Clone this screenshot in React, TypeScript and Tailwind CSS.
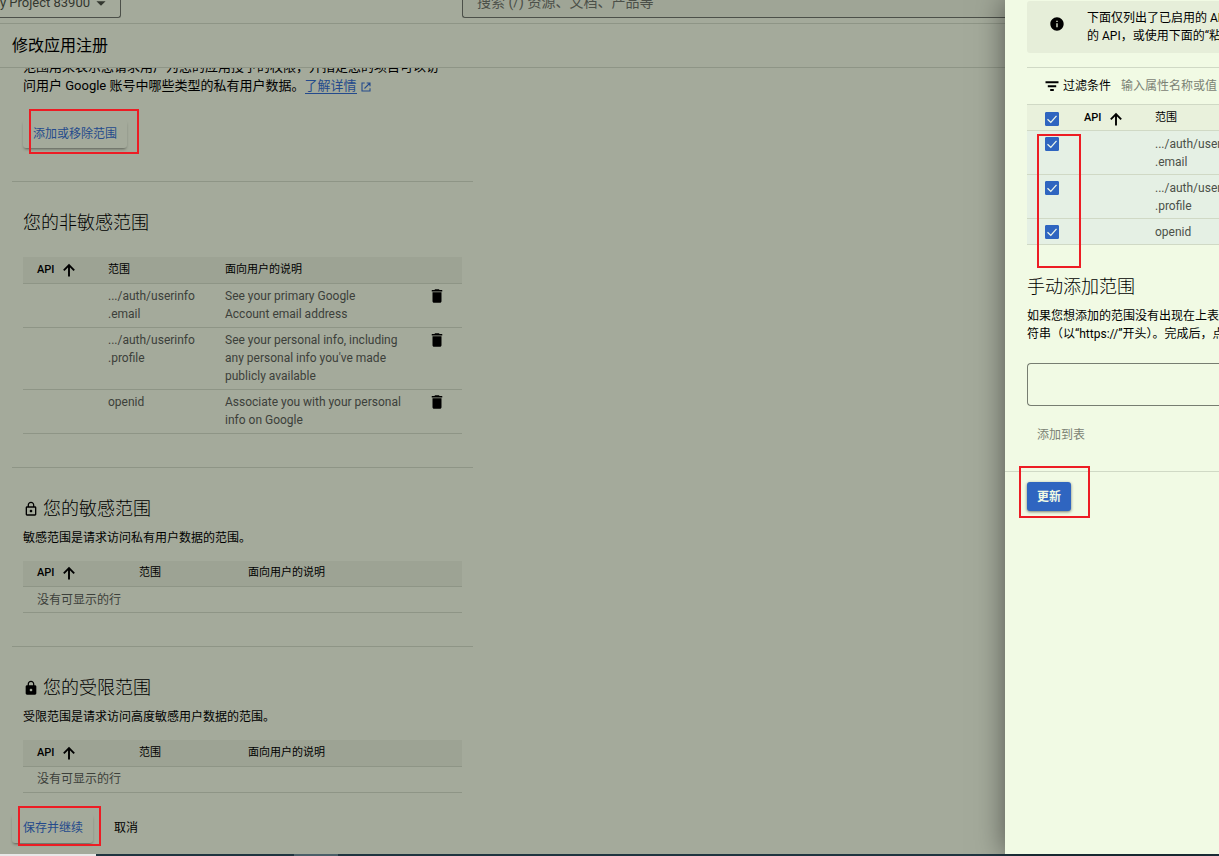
import type { ReactNode } from 'react';
import { MdArrowDropDown, MdDelete, MdInfo, MdLock, MdLockOutline } from 'react-icons/md';

type Scope = { name: string[]; description: string[] };

const scopes: Scope[] = [
  {
    name: ['.../auth/userinfo', '.email'],
    description: ['See your primary Google', 'Account email address'],
  },
  {
    name: ['.../auth/userinfo', '.profile'],
    description: ['See your personal info, including', "any personal info you've made", 'publicly available'],
  },
  {
    name: ['openid'],
    description: ['Associate you with your personal', 'info on Google'],
  },
];

function Lines({ items }: { items: string[] }) {
  return (
    <>
      {items.map((line) => (
        <span key={line} className="block whitespace-nowrap">
          {line}
        </span>
      ))}
    </>
  );
}

function Marked({ children, frame }: { children: ReactNode; frame: string }) {
  return (
    <div className="relative w-fit">
      {children}
      <span aria-hidden="true" className={`pointer-events-none absolute border-2 border-[#ed1c24] ${frame}`} />
    </div>
  );
}

function ApiLabel() {
  return (
    <span className="flex items-center gap-2 font-medium">
      API
      <svg viewBox="0 0 14 14" className="size-[14px] text-black" fill="none" stroke="currentColor" strokeWidth="1.9" aria-hidden="true">
        <path d="M7 13.5V2.2M1.8 7.3L7 2.1l5.2 5.2" />
      </svg>
    </span>
  );
}

function FilterIcon() {
  return (
    <svg viewBox="0 0 14 14" className="mr-1 size-[14px] shrink-0" fill="none" stroke="currentColor" strokeWidth="1.9" aria-hidden="true">
      <path d="M.5 3.2h13M2.8 7.2h8.4M5.2 11h3.6" />
    </svg>
  );
}

function ExternalIcon() {
  return (
    <svg viewBox="0 0 12 12" className="ml-1 inline size-[10px]" fill="none" stroke="currentColor" strokeWidth="1.3" aria-hidden="true">
      <path d="M4.5 1.2H1.2v9.6h9.6V7.5M6.8 1.2h4v4M10.6 1.4L4.2 7.8" />
    </svg>
  );
}

function Checkbox({ label }: { label: string }) {
  return (
    <label className="grid size-[14px] place-items-center">
      <input
        type="checkbox"
        defaultChecked
        aria-label={label}
        className="peer col-start-1 row-start-1 size-[14px] appearance-none rounded-[1px] border border-[#2f65c0] checked:bg-[#2f65c0]"
      />
      <svg
        viewBox="0 0 14 14"
        className="pointer-events-none col-start-1 row-start-1 hidden size-[14px] peer-checked:block"
        fill="none"
        stroke="#eef7ea"
        strokeWidth="1.3"
        aria-hidden="true"
      >
        <path d="M2.5 7.2l3.3 3.2 5.7-6.6" />
      </svg>
    </label>
  );
}

function EmptyTable({ label }: { label: string }) {
  return (
    <table aria-label={label} className="w-full table-fixed text-left">
      <thead>
        <tr className="h-[26px] border-b border-[#8e9586] bg-[#9da394] text-[11px]">
          <th className="w-[116px] py-0 pl-[14px]">
            <ApiLabel />
          </th>
          <th className="w-[109px] font-normal">范围</th>
          <th className="font-normal">面向用户的说明</th>
        </tr>
      </thead>
      <tbody>
        <tr className="h-[26px] border-b border-[#8e9586] text-[12px] text-[#3c403a]">
          <td colSpan={3} className="pl-[14px]">
            没有可显示的行
          </td>
        </tr>
      </tbody>
    </table>
  );
}

function LockedSection({ icon, title, text }: { icon: ReactNode; title: string; text: string }) {
  return (
    <section className="border-t border-[#8e9586] px-[11px] pt-[29px] pb-[33px]">
      <h2 className="flex items-center gap-1 text-[18px] leading-6 font-light">
        {icon}
        {title}
      </h2>
      <p className="mt-[7px] mb-[13px] text-[12px] leading-5">{text}</p>
      <EmptyTable label={title} />
    </section>
  );
}

function MainPage() {
  return (
    <div className="flex min-w-0 flex-1 flex-col bg-[#a4aa9b]">
      <header className="flex h-6 shrink-0 items-end overflow-hidden border-b border-[#8e9586] pb-[5px]">
        <button
          type="button"
          className="-mt-8 flex h-[30px] w-[121px] shrink-0 items-center justify-end whitespace-nowrap rounded-br-[3px] border-r border-b border-[#4c5049] pr-2 text-[13px] text-[#33372f]"
        >
          My Project 83900
          <MdArrowDropDown className="size-[22px] shrink-0" aria-hidden="true" />
        </button>
        <input
          type="search"
          aria-label="搜索"
          placeholder="搜索 (/) 资源、文档、产品等"
          className="-mt-8 ml-[341px] h-[32px] min-w-0 flex-1 rounded-bl-[3px] border-b border-l border-[#4c5049] bg-[#9fa596] pl-[14px] text-[14px] placeholder:text-[#4c5049]"
        />
      </header>
      <div className="flex h-11 shrink-0 items-center border-b border-[#8e9586] px-3">
        <h1 className="text-[16px] leading-6">修改应用注册</h1>
      </div>
      <main className="min-h-0 flex-1 overflow-hidden">
        <div className="-mt-[11px] ml-3 w-[461px]">
          <div className="px-[11px] pb-[33px]">
            <p className="text-[13px] leading-[19px] whitespace-nowrap">
              范围用来表示您请求用户为您的应用授予的权限，并指定您的项目可以访
              <br />
              问用户 Google 账号中哪些类型的私有用户数据。
              <a href="#scopes" className="text-[#244a8c]">
                <span className="border-b border-[#244a8c]">了解详情</span>
                <ExternalIcon />
              </a>
            </p>
            <div className="mt-[25px]">
              <Marked frame="-top-[11px] left-[6px] h-[45px] w-[110px]">
                <button
                  type="button"
                  className="block h-7 rounded-[3px] px-[10px] text-[12px] leading-7 text-[#244a8c] shadow-[0_2px_3px_-1px_rgba(0,0,0,0.45)]"
                >
                  添加或移除范围
                </button>
              </Marked>
            </div>
          </div>

          <section className="border-t border-[#8e9586] px-[11px] pt-[29px] pb-[33px]">
            <h2 className="mb-[22px] text-[18px] leading-6 font-light">您的非敏感范围</h2>
            <table aria-label="您的非敏感范围" className="w-full table-fixed text-left">
              <thead>
                <tr className="h-[26px] border-b border-[#8e9586] bg-[#9da394] text-[11px]">
                  <th className="w-[85px] pl-[14px]">
                    <ApiLabel />
                  </th>
                  <th className="w-[117px] font-normal">范围</th>
                  <th className="w-[203px] font-normal">面向用户的说明</th>
                  <th />
                </tr>
              </thead>
              <tbody className="text-[12px] leading-[18px] text-[#3c403a]">
                {scopes.map((scope) => (
                  <tr key={scope.name.join('')} className="border-b border-[#8e9586] align-top">
                    <td />
                    <td className="pt-[3px] pb-1">
                      <Lines items={scope.name} />
                    </td>
                    <td className="pt-[3px] pb-1">
                      <Lines items={scope.description} />
                    </td>
                    <td className="pt-[3px]">
                      <button type="button" aria-label="删除" className="block text-black">
                        <MdDelete className="size-[18px]" />
                      </button>
                    </td>
                  </tr>
                ))}
              </tbody>
            </table>
          </section>

          <LockedSection
            icon={<MdLockOutline className="size-4" aria-hidden="true" />}
            title="您的敏感范围"
            text="敏感范围是请求访问私有用户数据的范围。"
          />
          <LockedSection
            icon={<MdLock className="size-4" aria-hidden="true" />}
            title="您的受限范围"
            text="受限范围是请求访问高度敏感用户数据的范围。"
          />

          <div className="-mt-3 flex items-center gap-[21px]">
            <Marked frame="-top-2 left-[6px] h-10 w-[83px]">
              <button
                type="button"
                className="block h-[29px] rounded-[3px] pr-[10px] pl-[11px] text-[12px] text-[#244a8c] shadow-[0_2px_3px_-1px_rgba(0,0,0,0.45)]"
              >
                保存并继续
              </button>
            </Marked>
            <button type="button" className="text-[12px]">
              取消
            </button>
          </div>
        </div>
      </main>
    </div>
  );
}

function ScopeDrawer() {
  return (
    <aside className="relative z-10 w-[214px] shrink-0 overflow-hidden bg-[#f1fae4] whitespace-nowrap shadow-[0_0_28px_rgba(0,0,0,0.5)]">
      <div className="pt-px pl-[22px]">
        <div className="flex h-[52px] rounded-l-[3px] bg-[#e6eed9] pt-2 pl-[22px] text-[12px] leading-[18px]">
          <MdInfo className="mt-[7px] mr-[22px] size-4 shrink-0" aria-hidden="true" />
          <p>
            下面仅列出了已启用的 API
            <br />
            的 API，或使用下面的“粘贴
          </p>
        </div>
        <div className="mt-[14px] flex h-[37px] items-center border-t border-[#d0d9c5] pl-[18px] text-[12px]">
          <FilterIcon />
          <label htmlFor="scope-filter">过滤条件</label>
          <input
            id="scope-filter"
            placeholder="输入属性名称或值"
            className="ml-[10px] min-w-0 flex-1 bg-transparent outline-none placeholder:text-[#7b8274]"
          />
        </div>
        <Marked frame="top-[30px] left-[10px] h-[134px] w-[44px]">
          <table aria-label="API 范围" className="w-[192px] table-fixed text-left">
            <thead>
              <tr className="h-[26px] border-y border-[#d0d9c5] bg-[#e9f1dc] text-[11px]">
                <th className="w-[57px] pt-0.5 pl-[18px]">
                  <Checkbox label="全选" />
                </th>
                <th className="w-[71px] pt-0.5">
                  <ApiLabel />
                </th>
                <th className="pt-0.5 font-normal">范围</th>
              </tr>
            </thead>
            <tbody className="text-[12px] leading-[18px] text-[#4c5049]">
              {scopes.map((scope) => (
                <tr key={scope.name.join('')} className="border-b border-[#d0d9c5] bg-[#e5f0e4] align-top">
                  <td className="pt-[6px] pl-[18px]">
                    <Checkbox label={scope.name.join('')} />
                  </td>
                  <td />
                  <td className="pt-1 pb-[3px]">
                    <Lines items={scope.name} />
                  </td>
                </tr>
              ))}
            </tbody>
          </table>
        </Marked>
        <h2 className="mt-[30px] text-[18px] leading-6 font-light">手动添加范围</h2>
        <p className="mt-2 text-[12px] leading-[18px]">
          如果您想添加的范围没有出现在上表中
          <br />
          符串（以“https://”开头）。完成后，点
        </p>
        <textarea
          aria-label="手动添加范围"
          className="mt-5 block h-[43px] w-full resize-none rounded-l-[4px] border border-r-0 border-[#777d71] bg-transparent px-3 py-2 text-[12px]"
        />
        <button type="button" className="mt-[15px] block h-7 px-[10px] text-[12px] text-[#7b8274]">
          添加到表
        </button>
      </div>
      <div className="mt-[22px] border-t border-[#d0d9c5] pt-[10px] pl-[22px]">
        <Marked frame="-top-4 -left-2 h-[52px] w-[71px]">
          <button
            type="button"
            className="block h-[29px] rounded-[3px] bg-[#2f65c0] px-[10px] text-[12px] font-bold text-[#f1fae4] shadow-[0_1px_3px_rgba(0,0,0,0.5)]"
          >
            更新
          </button>
        </Marked>
      </div>
    </aside>
  );
}

export default function App() {
  return (
    <div
      lang="zh-CN"
      className="flex h-screen flex-col overflow-hidden font-['Roboto','Noto_Sans_CJK_SC',sans-serif] text-black"
    >
      <div className="flex min-h-0 flex-1">
        <MainPage />
        <ScopeDrawer />
      </div>
      <div className="flex h-0.5 shrink-0 bg-[#1f3540]" aria-hidden="true">
        <span className="w-24 bg-[#e8e8e8]" />
        <span className="ml-[198px] w-11 bg-[#4a5f68]" />
      </div>
    </div>
  );
}
